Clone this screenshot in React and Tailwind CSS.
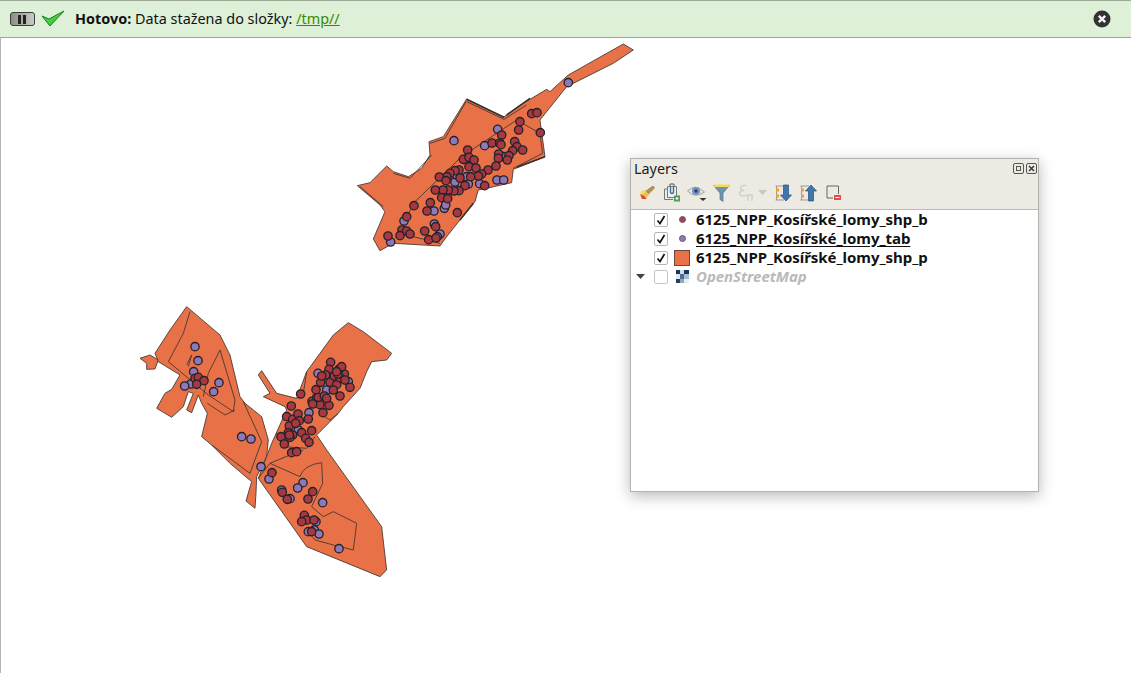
import React from 'react';

const font = { fontFamily: '"Noto Sans", sans-serif' };

// dots are in map-crop units (3 units = 1 px on screen)
const topBlue = [[655,128],[312,302],[443,268],[404,317],[441,420],[461,420],[389,431],[315,426],[350,410],[355,432],[283,505],[287,495],[252,513],[162,543],[253,552],[270,582],[262,590],[122,606],[460,350],[320,405]];
const topRed = [[545,221],[561,218],[510,245],[506,270],[571,278],[455,285],[426,309],[449,309],[453,314],[494,305],[501,320],[518,330],[488,332],[477,347],[472,360],[446,342],[445,355],[353,330],[340,358],[357,352],[372,360],[357,380],[378,384],[414,390],[438,378],[395,402],[385,408],[327,390],[315,392],[300,400],[291,410],[268,411],[362,410],[330,414],[288,422],[345,437],[404,437],[327,452],[312,453],[295,450],[279,450],[256,450],[275,473],[293,476],[192,497],[241,488],[231,513],[322,518],[170,530],[156,570],[170,573],[180,582],[150,587],[114,588],[224,573],[257,560],[236,599],[258,594]];
const botBlue = [[195,140],[204,182],[191,215],[183,252],[164,258],[267,248],[251,275],[335,410],[363,417],[393,500],[417,537],[519,548],[503,564],[480,596],[455,570],[578,608],[558,665],[553,690],[535,695],[567,702],[627,746],[564,220],[537,338],[655,245],[590,270],[505,390]];
const botRed = [[195,235],[205,232],[222,242],[200,253],[512,282],[484,318],[470,350],[488,358],[504,342],[508,362],[535,357],[546,304],[560,292],[570,314],[597,316],[579,338],[565,292],[583,288],[558,269],[572,247],[600,247],[620,254],[643,222],[628,207],[602,187],[597,208],[587,225],[613,228],[630,233],[624,222],[635,200],[645,240],[660,262],[630,288],[478,378],[475,398],[488,405],[515,398],[545,392],[453,410],[463,432],[480,412],[527,415],[537,427],[485,458],[500,455],[426,518],[457,577],[472,598],[548,575],[534,597],[523,646],[530,660],[515,665],[545,695],[552,660],[610,270],[590,295],[548,312],[620,215],[575,228],[478,405],[497,370]];

const Dots = ({ items, fill }) => (
  <g fill={fill} stroke="#23222a" strokeWidth="4">
    {items.map(([x, y], i) => <circle key={i} cx={x} cy={y} r="12.5" />)}
  </g>
);

const MapCanvas = () => (
  <svg className="absolute top-0 left-0" width="1131" height="673" viewBox="0 0 1131 673">
    {/* top area */}
    <g transform="translate(350 40) scale(0.3333)" stroke="#3a3330" strokeWidth="2.5" fill="#e97147" strokeLinejoin="round">
      <path d="M22 437 L60 428 L110 378 L130 395 L175 410 L215 385 L240 345 L237 305 L280 290 L350 177 L460 232 L520 190 L590 148 L600 155 L655 105 L820 12 L850 30 L790 70 L650 140 L598 205 L570 240 L585 350 L490 388 L485 428 L410 445 L385 450 L375 485 L330 540 L290 590 L270 618 L130 610 L90 632 L70 597 L105 515 L90 495 Z" />
      <path fill="none" d="M350 185 L462 238 L530 195 M150 580 L190 490 L335 350 L500 240 L570 280 L578 340 L490 385 M150 580 L270 610 M30 440 L100 500 M130 400 L180 415 L245 345 M240 310 L285 295 L348 185" />
      <path fill="none" strokeWidth="5" d="M350 178 L462 232 M470 225 L540 175 M585 350 L500 382 M330 540 L370 490" />
      <Dots items={topBlue} fill="#8f78b8" />
      <Dots items={topRed} fill="#a8383f" />
    </g>
    {/* bottom area */}
    <g transform="translate(130 300) scale(0.3333)" stroke="#3a3330" strokeWidth="2.5" fill="#e97147" strokeLinejoin="round">
      <path d="M30 175 L60 165 L85 180 L75 207 L50 208 L50 190 Z" />
      <path d="M75 160 L120 90 L170 20 L270 105 L300 165 L330 290 L345 310 L395 350 L415 420 L410 470 L380 530 L378 580 L375 625 L348 603 L365 545 L300 490 L245 435 L215 410 L232 340 L215 310 L205 285 L185 338 L170 330 L190 280 L175 275 L160 320 L125 352 L80 325 L105 280 L125 268 L150 225 L85 185 Z" />
      <path d="M385 535 L425 430 L470 330 L465 320 L400 290 L420 280 L385 225 L395 212 L440 280 L500 295 L530 215 L610 105 L655 68 L700 95 L785 160 L770 180 L725 185 L710 215 L690 265 L640 320 L625 340 L570 395 L560 405 L590 450 L755 680 L770 810 L750 830 L530 740 Z" />
      <path fill="none" d="M180 35 L160 100 L115 185 L235 285 L310 335 L315 300 L270 150 L235 220 L220 290 M340 305 L395 425 L360 520 L245 435 M232 310 L285 345 L315 330 M170 195 L185 165 L175 200 M420 490 L510 530 Q520 495 575 488 L578 550 L545 620 L580 650 L610 635 L680 670 L670 750 L610 735 L555 720 L530 690 M385 535 L420 490 L480 465 L520 450 M625 340 L600 360 L570 340 M440 400 L460 440 L530 445 L555 410 M530 215 L520 280" />
      <Dots items={botBlue} fill="#8f78b8" />
      <Dots items={botRed} fill="#a8383f" />
    </g>
  </svg>
);

const PauseIcon = () => (
  <div className="w-[25px] h-[14px] rounded-[3px] border border-[#3c3c3c] bg-gradient-to-r from-[#8b8f85] to-[#c9ccc3] flex items-center justify-center gap-[2px] pr-[2px]">
    <span className="w-[3px] h-[9px] bg-[#222]"></span>
    <span className="w-[3px] h-[9px] bg-[#222]"></span>
  </div>
);

const CheckIcon = () => (
  <svg width="24" height="18" viewBox="0 0 24 18">
    <path d="M1 6 L8 9 L23 1 L9 16 Z" fill="#3fd13f" stroke="#1f7a1f" strokeWidth="1" strokeLinejoin="round" />
  </svg>
);

const CloseIcon = () => (
  <svg width="18" height="18" viewBox="0 0 18 18">
    <circle cx="9" cy="9" r="8.5" fill="#333" />
    <path d="M5.8 5.8 L12.2 12.2 M12.2 5.8 L5.8 12.2" stroke="#f4f4f4" strokeWidth="2.4" />
  </svg>
);

const StyleIcon = () => (
  <svg width="16" height="16" viewBox="0 0 16 16">
    <path d="M7 6 L14 1 L15.500 3 L9.500 9 Z" fill="#b98f55" stroke="#8d6e3f" strokeWidth="0.6" />
    <path d="M6 5 L10 10 L7 13 L2 10 Z" fill="#e8c547" />
    <path d="M1 9 L5 11 L8 14 L3 14 Z" fill="#e0413a" />
    <path d="M4 5 L7 7 L4 9 L1 8 Z" fill="#f2dc6b" />
  </svg>
);

const AddGroupIcon = () => (
  <svg width="16" height="19" viewBox="0 0 16 19" fill="none">
    <path d="M3 6 H0.500 V16.500 H9" stroke="#777" />
    <path d="M3.500 3.500 H12.500 V14.500 H3.500 Z" stroke="#777" fill="#f2f0ec" />
    <path d="M6 3 V1 H10 V3" stroke="#555" />
    <path d="M6.500 4 V9.500 Q8 11.500 9.500 9.500 V4" stroke="#2f6fa8" strokeWidth="1.4" />
    <rect x="10" y="12.500" width="6" height="6" fill="#4f9e5a" />
    <path d="M13 14 V17 M11.500 15.500 H14.500" stroke="#fff" />
  </svg>
);

const EyeIcon = () => (
  <svg width="20" height="18" viewBox="0 0 20 18">
    <path d="M0.500 7 Q8 -1 17.500 8 Q8 15 0.500 7 Z" fill="#e4e4e4" stroke="#a5a5a5" />
    <circle cx="9" cy="7" r="4" fill="#6f97bf" />
    <circle cx="9" cy="7" r="1.700" fill="#24405f" />
    <path d="M12.500 14 H19.500 L16 17 Z" fill="#333" />
  </svg>
);

const FilterIcon = () => (
  <svg width="17" height="18" viewBox="0 0 17 18">
    <path d="M0.500 1.500 H16.500 L10 9 V17.500 L7 15.500 V9 Z" fill="#6f94ad" stroke="#4f7690" strokeWidth="0.7" />
    <rect x="0.500" y="0.500" width="16" height="2.500" fill="#f0dc5a" />
  </svg>
);

const ExprIcon = () => (
  <div className="flex items-center gap-[4px]">
    <svg width="16" height="18" viewBox="0 0 16 18" fill="none" stroke="#cfcdc9" strokeWidth="1.3">
      <path d="M8 1.500 Q2 1 2.500 4.500 Q3 6.500 6 6.500 Q1 7 1.500 10 Q3 13 8 11.500" />
      <path d="M8 11 H15 M10 11 V17 M14 11 V17" />
    </svg>
    <svg width="9" height="5" viewBox="0 0 9 5"><path d="M0 0 H9 L4.500 5 Z" fill="#c9c7c3" /></svg>
  </div>
);

const MoveIcon = ({ up }) => (
  <svg width="17" height="18" viewBox="0 0 17 18" fill="none">
    <path d="M0.500 2 H9 M0.500 16 H9 M1.500 2 V16" stroke="#999" />
    <rect x="1" y="4.500" width="3" height="3" fill="#f0a030" />
    <rect x="1" y="10.500" width="3" height="3" fill="#f0a030" />
    {up
      ? <path d="M11 1 L16.500 7 H13.500 V17 H8.500 V7 H5.500 Z" fill="#3f77aa" stroke="#2a4f78" strokeWidth="0.7" />
      : <path d="M8.500 1 H13.500 V11 H16.500 L11 17 L5.500 11 H8.500 Z" fill="#3f77aa" stroke="#2a4f78" strokeWidth="0.7" />}
  </svg>
);

const RemoveIcon = () => (
  <svg width="15" height="16" viewBox="0 0 15 16" fill="none">
    <path d="M12.500 9 V1 H1 V13 H7" stroke="#666" />
    <rect x="8" y="10" width="7" height="5" rx="0.500" fill="#e5484d" />
    <path d="M9.500 12.500 H13.500" stroke="#fff" />
  </svg>
);

const Check = ({ on }) => (
  <span className={`w-[14px] h-[14px] rounded-[2px] border border-[#b9b7b3] bg-white flex items-center justify-center ${on ? '' : 'opacity-80'}`}>
    {on && (
      <svg width="10" height="10" viewBox="0 0 10 10" fill="none">
        <path d="M1.500 5.500 L4 8.500 L8.500 1" stroke="#111" strokeWidth="1.700" />
      </svg>
    )}
  </span>
);

const LayerRow = ({ symbol, name, underline, muted, arrow, on = true }) => (
  <div className="h-[19px] flex items-center">
    <div className="w-[23px] pl-[5px] flex items-center">
      {arrow && <svg width="9" height="5" viewBox="0 0 9 5"><path d="M0 0 H9 L4.500 5 Z" fill="#444" /></svg>}
    </div>
    <Check on={on} />
    <div className="w-[28px] flex items-center justify-center">{symbol}</div>
    <span className={`text-[15px] leading-[17px] font-bold tracking-[-0.05px] ${underline ? 'underline underline-offset-2' : ''} ${muted ? 'italic text-[#b9b9b9]' : 'text-[#111]'}`}>{name}</span>
  </div>
);

const Dot = ({ color }) => <span className="w-[7px] h-[7px] rounded-full border border-[#6b5a66]" style={{ backgroundColor: color }}></span>;

const OsmIcon = () => (
  <div className="w-[13px] h-[13px] grid grid-cols-3 grid-rows-3">
    <span className="bg-[#1d3557]"></span><span className="bg-[#d5dde6]"></span><span className="bg-[#1d3557]"></span>
    <span className="bg-[#dfe6ee]"></span><span className="bg-[#4a6f96]"></span><span className="bg-[#a9bdd1]"></span>
    <span className="bg-[#25405f]"></span><span className="bg-[#8fa8c0]"></span><span className="bg-[#e8edf2]"></span>
  </div>
);

const Tool = ({ children, wide }) => (
  <div className={`${wide ? 'w-[37px]' : 'w-[25px]'} flex items-center justify-center`}>{children}</div>
);

const LayersPanel = () => (
  <div className="absolute top-[120px] left-[629px] w-[409px] h-[334px] bg-[#edeae4] border border-[#b4b2ae] shadow-[0_4px_14px_rgba(0,0,0,0.28)] flex flex-col">
    <div className="h-[20px] flex items-center justify-between pl-[3px] pr-[1px] pb-[1px]">
      <span className="text-[14.4px] text-[#1c1c1c]">Layers</span>
      <div className="flex items-center gap-[2px]">
        <span className="w-[11px] h-[11px] rounded-[2px] border border-[#555] flex items-center justify-center">
          <span className="w-[5px] h-[5px] border border-[#555]"></span>
        </span>
        <span className="w-[11px] h-[11px] rounded-[2px] border border-[#555] flex items-center justify-center">
          <svg width="7" height="7" viewBox="0 0 7 7"><path d="M1 1 L6 6 M6 1 L1 6" stroke="#333" strokeWidth="1.400" /></svg>
        </span>
      </div>
    </div>
    <div className="h-[30px] flex items-center pl-[3px] pb-[3px]">
      <Tool><StyleIcon /></Tool>
      <Tool><AddGroupIcon /></Tool>
      <Tool><EyeIcon /></Tool>
      <Tool><FilterIcon /></Tool>
      <Tool wide><ExprIcon /></Tool>
      <Tool><MoveIcon /></Tool>
      <Tool><MoveIcon up /></Tool>
      <Tool><RemoveIcon /></Tool>
    </div>
    <div className="flex-1 bg-white border-t border-[#bdbbb7]">
      <LayerRow symbol={<Dot color="#a8434a" />} name="6125_NPP_Kosířské_lomy_shp_b" />
      <LayerRow symbol={<Dot color="#8f78b8" />} name="6125_NPP_Kosířské_lomy_tab" underline />
      <LayerRow symbol={<span className="w-[16px] h-[16px] bg-[#e97147] border border-[#6b4a3c]"></span>} name="6125_NPP_Kosířské_lomy_shp_p" />
      <LayerRow symbol={<OsmIcon />} name="OpenStreetMap" muted arrow on={false} />
    </div>
  </div>
);

export default function App() {
  return (
    <div className="w-[1131px] h-[673px] bg-white overflow-hidden flex flex-col" style={font}>
      <div className="h-[38px] bg-[#dff0d8] border-y border-[#9aa893] flex items-center pl-[10px] pr-[20px]">
        <PauseIcon />
        <div className="ml-[6px] mr-[9px] flex"><CheckIcon /></div>
        <span className="text-[14.4px] text-[#111] ml-[1px]">
          <b>Hotovo:</b> Data stažena do složky: <a className="text-[#3c8a00] underline">/tmp//</a>
        </span>
        <div className="ml-auto flex"><CloseIcon /></div>
      </div>
      <div className="relative flex-1 border-l border-[#b5b5b5]">
        <div className="absolute top-[-38px] left-[-1px] w-[1131px] h-[673px]"><MapCanvas /></div>
        <LayersPanel />
      </div>
    </div>
  );
}
